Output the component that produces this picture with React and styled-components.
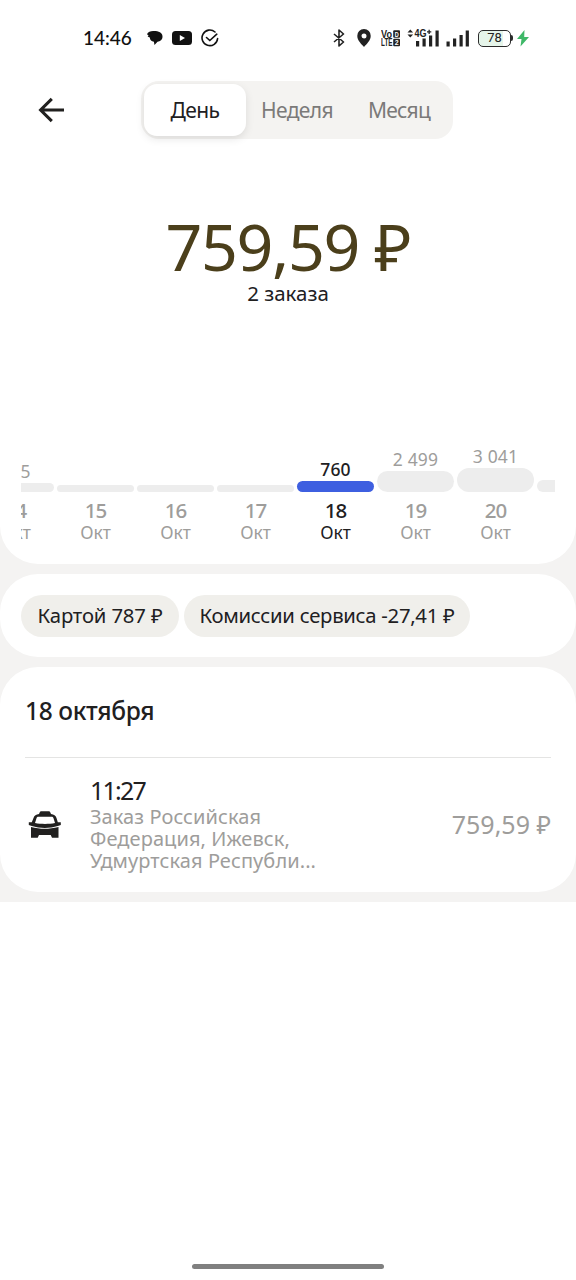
import React from 'react';
import styled, { createGlobalStyle } from 'styled-components';

const GlobalStyle = createGlobalStyle`
  * {
    box-sizing: border-box;
  }

  body {
    margin: 0;
    background: #fff;
    color: #21201f;
    font-family: 'Noto Sans', sans-serif;
  }
`;

const Screen = styled.div`
  display: flex;
  flex-direction: column;
  width: 576px;
  height: 1280px;
  overflow: hidden;
  background: #fff;
`;

const Text = styled.span`
  display: block;
  white-space: nowrap;
  font-size: ${(p) => p.$size}px;
  line-height: ${(p) => p.$line}px;
  font-weight: ${(p) => p.$weight || 400};
  letter-spacing: ${(p) => p.$spacing || 0}px;
  color: ${(p) => p.$color || '#21201f'};
`;

const StatusBar = styled.div`
  display: flex;
  align-items: center;
  height: 76px;
  padding: 0 47px 0 83px;
`;

const Clock = styled.div`
  width: 64px;
  padding-bottom: 1px;
  font-family: Lato, sans-serif;
  font-size: 19px;
  font-weight: 500;
  line-height: 24px;
  color: #111;
`;

const StatusLeft = styled.div`
  display: flex;
  align-items: center;
  gap: 9px;
  flex: 1;
`;

const StatusRight = styled.div`
  display: flex;
  align-items: center;
`;

const Icon = styled.svg`
  display: block;
  flex: none;
  margin-left: ${(p) => p.$left || 0}px;
`;

const Battery = styled.div`
  width: 33px;
  height: 17px;
  margin-left: 9px;
  border: 1.5px solid #2b2b2b;
  border-radius: 5px;
  background: linear-gradient(90deg, #e6f5ea 78%, #fff 78%);
  font-family: Roboto, sans-serif;
  font-size: 13px;
  line-height: 14px;
  text-align: center;
  color: #222;
`;

const BatteryTip = styled.div`
  width: 2px;
  height: 6px;
  border-radius: 0 2px 2px 0;
  background: #2b2b2b;
`;

const Header = styled.div`
  display: flex;
  align-items: center;
  height: 68px;
  padding-left: 38px;
`;

const BackButton = styled.button`
  width: 103px;
  padding: 0;
  border: 0;
  background: none;
`;

const Tabs = styled.div`
  display: grid;
  grid-template-columns: 102px 102px 102px;
  width: 312px;
  height: 58px;
  padding: 3px;
  border-radius: 18px;
  background: #f4f3f1;
`;

const Tab = styled.button`
  display: flex;
  align-items: center;
  justify-content: center;
  padding: 0 0 1px;
  border: 0;
  border-radius: 13px;
  font-family: inherit;
  background: ${(p) => (p.$active ? '#fff' : 'transparent')};
  box-shadow: ${(p) => (p.$active ? '0 3px 8px rgba(0, 0, 0, 0.1)' : 'none')};
`;

const Summary = styled.div`
  display: flex;
  flex-direction: column;
  align-items: center;
  height: 296px;
  padding-top: 66px;
`;

const Feed = styled.main`
  display: flex;
  flex-direction: column;
  gap: 10px;
  padding-bottom: 10px;
  background: #f4f3f2;
`;

const Card = styled.section`
  border-radius: ${(p) => (p.$top ? '0 0 38px 38px' : '38px')};
  background: #fff;
`;

const Chart = styled.div`
  display: flex;
  gap: 3px;
  height: 124px;
  margin: 0 21px;
  overflow: hidden;
`;

const Day = styled.div`
  display: flex;
  flex: none;
  flex-direction: column;
  align-items: center;
  width: 77px;

  &:first-child {
    margin-left: -44px;
  }
`;

const Plot = styled.div`
  display: flex;
  flex-direction: column;
  align-items: center;
  justify-content: flex-end;
  width: 100%;
  height: 52px;
  margin-bottom: 6px;
`;

const Bar = styled.div`
  width: 100%;
  margin-top: 1px;
  border-radius: 12px;
  background: ${(p) => (p.$active ? '#3e5fe0' : '#ededed')};
`;

const Chips = styled.div`
  display: flex;
  gap: 5px;
  padding: 21px 21px 20px;
`;

const Chip = styled.div`
  display: flex;
  align-items: center;
  justify-content: center;
  width: ${(p) => p.$width}px;
  height: 42px;
  padding-bottom: 2px;
  border-radius: 21px;
  background: #f0efeb;
`;

const CardTitle = styled.div`
  height: 91px;
  margin: 0 25px;
  padding-top: 28px;
  border-bottom: 1px solid #e4e4e3;
`;

const Order = styled.div`
  display: flex;
  height: 134px;
  padding: 16px 25px 0 28px;
`;

const OrderIcon = styled.div`
  width: 62px;
  padding-top: 37px;
`;

const OrderInfo = styled.div`
  flex: 1;
`;

const OrderPrice = styled.div`
  padding-top: 34px;
`;

const HomeIndicator = styled.div`
  width: 192px;
  height: 5px;
  margin: auto auto 11px;
  border-radius: 3px;
  background: #808080;
`;

const days = [
  { day: '14', value: '425', height: 9 },
  { day: '15', height: 7 },
  { day: '16', height: 7 },
  { day: '17', height: 7 },
  { day: '18', value: '760', height: 11, active: true },
  { day: '19', value: '2 499', height: 21 },
  { day: '20', value: '3 041', height: 24 },
];

const address = ['Заказ Российская', 'Федерация, Ижевск,', 'Удмуртская Республи...'];

const Status = () => (
  <StatusBar>
    <Clock>14:46</Clock>
    <StatusLeft>
      <Icon width="16" height="16" viewBox="0 0 16 16" fill="#111">
        <path d="M0 4.200C1 1.600 4 .8 7 1c4.500 0 8.500 1.500 8.500 5.500 0 3.200-2.300 5-5 5.300L7.500 15l-.6-3.300C4.500 11.300 3 10 2.800 7.500L.6 6.500l1-.9z" />
      </Icon>
      <Icon width="20" height="14" viewBox="0 0 20 14">
        <rect width="20" height="14" rx="3.500" fill="#111" />
        <path d="M7.800 4l5.200 3-5.200 3z" fill="#fff" />
      </Icon>
      <Icon width="18" height="18" viewBox="0 0 18 18" fill="none" stroke="#111" strokeWidth="1.600" strokeLinecap="round">
        <path d="M14 3A7.800 7.800 0 1 0 16.600 9.500" />
        <path d="M5.500 8.500l3.300 3 7-6.300" />
      </Icon>
    </StatusLeft>
    <StatusRight>
      <Icon width="12" height="18" viewBox="0 0 12 18" fill="none" stroke="#222" strokeWidth="1.600" strokeLinejoin="round">
        <path d="M1 5l9.500 8L6 17V1l4.500 4L1 13" />
      </Icon>
      <Icon $left={12} width="14" height="18" viewBox="0 0 14 18" fill="#222">
        <path fillRule="evenodd" d="M7 0A6.700 6.700 0 0 0 .3 7c0 4.500 4.200 8 6.700 11 2.500-3 6.700-6.500 6.700-11A6.700 6.700 0 0 0 7 0zm0 4.500a2.500 2.500 0 1 1 0 5 2.500 2.500 0 0 1 0-5z" />
      </Icon>
      <Icon $left={10} width="19" height="18" viewBox="0 0 19 18" fill="#222" fontFamily="Liberation Sans, sans-serif" fontWeight="700">
        <text x="0" y="8.800" fontSize="10.500" textLength="11" lengthAdjust="spacingAndGlyphs">Vo</text>
        <text x="0" y="17.300" fontSize="10.500" textLength="11.500" lengthAdjust="spacingAndGlyphs">LTE</text>
        <rect x="12.200" y="1.200" width="6.800" height="7.600" rx="1" />
        <rect x="12.200" y="9.700" width="6.800" height="7.600" rx="1" />
        <text x="13.700" y="7.500" fontSize="7" fill="#fff" textLength="4" lengthAdjust="spacingAndGlyphs">D</text>
        <text x="13.700" y="16" fontSize="7" fill="#fff">2</text>
      </Icon>
      <Icon $left={7} width="32" height="18" viewBox="0 0 32 18" fill="#222">
        <path d="M.5 3.500L3.300.5l2.800 3zM.5 5.500h5.600l-2.800 3z" />
        <text x="7.500" y="8" fontSize="11" fontWeight="700" fontFamily="Liberation Sans, sans-serif" textLength="12" lengthAdjust="spacingAndGlyphs">4G</text>
        <path d="M20 2.200h1.500V.7h1.300v1.500h1.500v1.300h-1.500V5h-1.300V3.500H20z" />
        <path d="M9 12h3.200v5.500H9zM15.500 9.500h3.200v8h-3.200zM22 6.500h3.200v11H22zM28.500 1.500h3.200v16h-3.200z" />
      </Icon>
      <Icon $left={7} width="23" height="18" viewBox="0 0 23 18" fill="#222">
        <path d="M.5 12.500h3.200v5H.5zM7 9.500h3.200v8H7zM13.500 6h3.200v11.500h-3.200zM19.700 1.500h3.200v16h-3.200z" />
      </Icon>
      <Battery>78</Battery>
      <BatteryTip />
      <Icon $left={4} width="12" height="18" viewBox="0 0 12 18" fill="#3fb868">
        <path d="M7.500 1L0 10h4.500l-1 7.500L12 8H7.200z" />
      </Icon>
    </StatusRight>
  </StatusBar>
);

const App = () => (
  <>
    <GlobalStyle />
    <Screen>
      <Status />
      <Header>
        <BackButton aria-label="Назад">
          <Icon width="27" height="26" viewBox="0 0 27 26" fill="none" stroke="#21201f" strokeWidth="3.100">
            <path d="M26 13H3M13.800 1.800L2.600 13l11.200 11.200" />
          </Icon>
        </BackButton>
        <Tabs>
          <Tab $active>
            <Text $size={21} $line={28} $spacing={-0.55}>День</Text>
          </Tab>
          <Tab>
            <Text $size={21} $line={28} $spacing={-0.6} $color="#7b7a79">Неделя</Text>
          </Tab>
          <Tab>
            <Text $size={21} $line={28} $spacing={-0.7} $color="#7b7a79">Месяц</Text>
          </Tab>
        </Tabs>
      </Header>
      <Summary>
        <Text $size={64.5} $line={72} $color="#4b3f1b" $spacing={-1.4}>759,59 ₽</Text>
        <Text $size={20.5} $line={23}>2 заказа</Text>
      </Summary>
      <Feed>
        <Card $top>
          <Chart>
            {days.map((d) => (
              <Day key={d.day}>
                <Plot>
                  {d.value && (
                    <Text $size={17.5} $line={22} $spacing={0.2} $weight={d.active ? 500 : 400} $color={d.active ? '#21201f' : '#9e9d9b'}>
                      {d.value}
                    </Text>
                  )}
                  <Bar $active={d.active} style={{ height: d.height }} />
                </Plot>
                <Text $size={20.5} $line={24} $spacing={-1} $weight={500} $color={d.active ? '#21201f' : '#9e9d9b'}>
                  {d.day}
                </Text>
                <Text $size={17.5} $line={20} $color={d.active ? '#21201f' : '#9e9d9b'}>
                  Окт
                </Text>
              </Day>
            ))}
            <Day>
              <Plot>
                <Bar style={{ height: 12 }} />
              </Plot>
            </Day>
          </Chart>
        </Card>
        <Card>
          <Chips>
            <Chip $width={158}>
              <Text $size={20.3} $line={26} $spacing={-0.15}>Картой 787 ₽</Text>
            </Chip>
            <Chip $width={286}>
              <Text $size={20.3} $line={26} $spacing={-0.28}>Комиссии сервиса -27,41 ₽</Text>
            </Chip>
          </Chips>
        </Card>
        <Card>
          <CardTitle>
            <Text $size={24.5} $line={32} $weight={500} $spacing={-0.35}>18 октября</Text>
          </CardTitle>
          <Order>
            <OrderIcon>
              <Icon width="33" height="28" viewBox="0 0 33 28" fill="#21201f">
                <path
                  fillRule="evenodd"
                  d="M11 3l1-2.200q.3-.6 1-.6h8q.7 0 1 .6L23 3c3 .3 4.600 1.500 5.500 4l1.300 4.300h3V14l-3 1c-8 2.500-18 2.500-26 0l-3-1v-2.700h3L5.500 7C6.400 4.500 8 3.300 11 3zM8.500 7.200L7 12c6 1.200 14 1.200 20 0l-1.500-4.800c-.4-1-1-1.400-2-1.400h-13c-1 0-1.600.4-2 1.400z"
                />
                <path d="M3 16c9 2.400 18 2.400 27.500 0v10.800h-6.500L22.700 24H11l-1.300 2.800H3z" />
              </Icon>
            </OrderIcon>
            <OrderInfo>
              <Text $size={25} $line={32} $spacing={-1.8}>11:27</Text>
              {address.map((line) => (
                <Text key={line} $size={20} $line={22.2} $spacing={0.08} $color="#9e9d9b">
                  {line}
                </Text>
              ))}
            </OrderInfo>
            <OrderPrice>
              <Text $size={25} $line={32} $color="#9e9d9b">759,59 ₽</Text>
            </OrderPrice>
          </Order>
        </Card>
      </Feed>
      <HomeIndicator />
    </Screen>
  </>
);

export default App;
